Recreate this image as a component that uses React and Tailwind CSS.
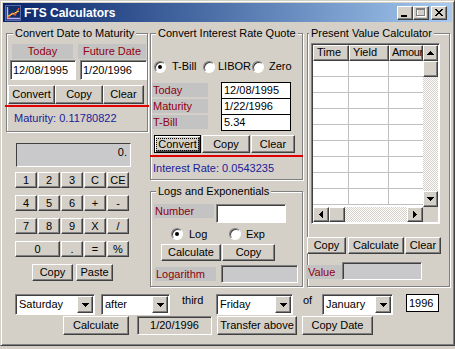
import React from "react";

const RAISED =
  "border border-t-white border-l-white border-r-[#404040] border-b-[#404040] shadow-[inset_-1px_-1px_0_#808080]";
const SUNKEN =
  "border border-t-[#808080] border-l-[#808080] border-r-white border-b-white shadow-[inset_1px_1px_0_#404040]";
const LABEL = "bg-[#c3c3c3] text-[#900010]";

function Btn({ className = "", children }) {
  return (
    <div
      className={`${RAISED} bg-[#d4d0c8] flex items-center justify-center leading-[13px] whitespace-nowrap shrink-0 ${className}`}
    >
      {children}
    </div>
  );
}

function Group({ title, className = "", legend = "ml-[5px]", children }) {
  return (
    <fieldset
      className={`border border-[#808080] shadow-[inset_1px_1px_0_#ffffff,1px_1px_0_#ffffff] min-w-0 ${className}`}
    >
      <legend className={`px-[2px] leading-[13px] bg-[#d4d0c8] ${legend}`}>{title}</legend>
      {children}
    </fieldset>
  );
}

function Radio({ checked }) {
  return (
    <div className="w-[12px] h-[12px] shrink-0 rounded-full bg-white border border-t-[#808080] border-l-[#808080] border-b-white border-r-white shadow-[inset_1px_1px_0_#404040] flex items-center justify-center">
      {checked && <div className="w-[4px] h-[4px] rounded-full bg-black" />}
    </div>
  );
}

function RadioItem({ className = "", checked, label, gap = "ml-[5px]" }) {
  return (
    <div className={`flex items-center shrink-0 ${className}`}>
      <Radio checked={checked} />
      <span className={`${gap} leading-[13px]`}>{label}</span>
    </div>
  );
}

function TriDown() {
  return (
    <svg width="7" height="4" viewBox="0 0 7 4" shapeRendering="crispEdges">
      <path d="M0 0h7v1h-1v1h-1v1h-1v1h-1v-1h-1v-1h-1v-1h-1z" fill="#000" />
    </svg>
  );
}
function TriUp() {
  return (
    <svg width="7" height="4" viewBox="0 0 7 4" shapeRendering="crispEdges">
      <path d="M3 0h1v1h1v1h1v1h1v1h-7v-1h1v-1h1v-1h1z" fill="#000" />
    </svg>
  );
}
function TriLeft() {
  return (
    <svg width="4" height="7" viewBox="0 0 4 7" shapeRendering="crispEdges">
      <path d="M0 3h1v-1h1v-1h1v-1h1v7h-1v-1h-1v-1h-1v-1h-1z" fill="#000" />
    </svg>
  );
}
function TriRight() {
  return (
    <svg width="4" height="7" viewBox="0 0 4 7" shapeRendering="crispEdges">
      <path d="M0 0h1v1h1v1h1v1h1v1h-1v1h-1v1h-1v1h-1z" fill="#000" />
    </svg>
  );
}

function Select({ className = "", value }) {
  return (
    <div className={`${SUNKEN} p-px bg-white flex items-stretch shrink-0 ${className}`}>
      <span className="flex-1 pl-[2px] flex items-center leading-[13px] overflow-hidden whitespace-nowrap">
        {value}
      </span>
      <div className={`${RAISED} bg-[#d4d0c8] w-[16px] flex items-center justify-center`}>
        <TriDown />
      </div>
    </div>
  );
}

const CHECKER =
  "bg-[repeating-conic-gradient(#ffffff_0%_25%,#d4d0c8_0%_50%)] bg-[length:2px_2px]";

function PVGrid() {
  const rows = Array.from({ length: 9 });
  return (
    <div className={`ml-[3px] w-[129px] h-[181px] ${SUNKEN} p-px flex flex-col bg-white`}>
      <div className="flex flex-1 min-h-0">
        <div className="flex-1 flex flex-col overflow-hidden">
          <div className="flex h-[16px] shrink-0">
            <div className={`${RAISED} bg-[#d4d0c8] w-[36px] pl-[3px] leading-[13px]`}>Time</div>
            <div className={`${RAISED} bg-[#d4d0c8] w-[40px] pl-[3px] leading-[13px]`}>Yield</div>
            <div className={`${RAISED} bg-[#d4d0c8] flex-1 pl-[2px] leading-[13px] overflow-hidden whitespace-nowrap tracking-[-0.3px]`}>
              Amount
            </div>
          </div>
          {rows.map((_, i) => (
            <div key={i} className="flex h-[16px] shrink-0 border-b border-[#c0c0c0]">
              <div className="w-[36px] border-r border-[#c0c0c0]" />
              <div className="w-[40px] border-r border-[#c0c0c0]" />
              <div className="flex-1" />
            </div>
          ))}
        </div>
        <div className="w-[15px] flex flex-col shrink-0">
          <div className={`${RAISED} bg-[#d4d0c8] h-[16px] flex items-center justify-center`}>
            <TriUp />
          </div>
          <div className={`${RAISED} bg-[#d4d0c8] h-[16px]`} />
          <div className={`flex-1 ${CHECKER}`} />
          <div className={`${RAISED} bg-[#d4d0c8] h-[16px] flex items-center justify-center`}>
            <TriDown />
          </div>
        </div>
      </div>
      <div className="h-[15px] flex shrink-0">
        <div className={`${RAISED} bg-[#d4d0c8] w-[16px] flex items-center justify-center`}>
          <TriLeft />
        </div>
        <div className={`${RAISED} bg-[#d4d0c8] w-[16px]`} />
        <div className={`flex-1 ${CHECKER}`} />
        <div className={`${RAISED} bg-[#d4d0c8] w-[16px] flex items-center justify-center`}>
          <TriRight />
        </div>
        <div className="w-[15px] bg-[#d4d0c8]" />
      </div>
    </div>
  );
}

function TitleIcon() {
  return (
    <svg width="16" height="16" viewBox="0 0 16 16">
      <rect x="0.5" y="0.5" width="15" height="15" fill="#10306a" stroke="#5a6aa8" />
      <path d="M2.5 2 V13.5 H15" stroke="#c0b0ff" strokeWidth="1.4" fill="none" />
      <path d="M3 13 L7 8 L10 10 L14 3" stroke="#ff5030" strokeWidth="1.3" fill="none" />
      <path d="M3 11 L14 6" stroke="#f0e040" strokeWidth="1" fill="none" />
    </svg>
  );
}

function CaptionBtn({ children, className = "" }) {
  return (
    <div className={`${RAISED} bg-[#d4d0c8] w-[16px] h-[14px] flex items-center justify-center ${className}`}>
      {children}
    </div>
  );
}

export default function App() {
  const calcRows = [
    ["1", "2", "3", "C", "CE"],
    ["4", "5", "6", "+", "-"],
    ["7", "8", "9", "X", "/"],
  ];
  return (
    <div className="w-[455px] h-[349px] bg-[#d4d0c8] font-['Liberation_Sans',Arial,sans-serif] text-[11px] text-black">
      <div className="w-[455px] h-[346px] border border-t-[#d4d0c8] border-l-[#d4d0c8] border-b-[#404040] border-r-[#404040] shadow-[inset_1px_1px_0_#ffffff,inset_-1px_-1px_0_#808080] p-[2px] flex flex-col">
        {/* Title bar */}
        <div className="h-[19px] shrink-0 flex items-center bg-linear-to-r from-[#0a246a] to-[#a6caf0] pl-[2px] pr-[5px]">
          <TitleIcon />
          <span className="ml-[3px] text-white font-bold text-[12px] leading-[14px]">FTS Calculators</span>
          <div className="ml-auto flex items-center">
            <CaptionBtn>
              <svg width="8" height="8" viewBox="0 0 8 8" shapeRendering="crispEdges">
                <rect x="0" y="6" width="6" height="2" fill="#000" />
              </svg>
            </CaptionBtn>
            <CaptionBtn>
              <svg width="10" height="9" viewBox="0 0 10 9" shapeRendering="crispEdges">
                <rect x="1.5" y="1.5" width="8" height="7" fill="none" stroke="#ffffff" />
                <rect x="0.5" y="0.5" width="8" height="7" fill="none" stroke="#808080" />
                <rect x="0" y="1" width="9" height="1" fill="#808080" />
              </svg>
            </CaptionBtn>
            <CaptionBtn className="ml-[2px]">
              <svg width="8" height="7" viewBox="0 0 8 7" shapeRendering="crispEdges">
                <path
                  d="M0 0h2v1h1v1h2v-1h1v-1h2v1h-1v1h-1v1h-1v1h1v1h1v1h1v1h-2v-1h-1v-1h-2v1h-1v1h-2v-1h1v-1h1v-1h1v-1h-1v-1h-1v-1h-1z"
                  fill="#000"
                />
              </svg>
            </CaptionBtn>
          </div>
        </div>

        {/* Main columns */}
        <div className="flex items-start pl-[3px] mt-[5px]">
          {/* Left column */}
          <div className="w-[142px] shrink-0 flex flex-col">
            <Group title="Convert Date to Maturity" className="w-[142px]" legend="ml-[6px]">
              <div className="pt-[4px] pb-[6px]">
                <div className="flex h-[15px]">
                  <div className={`ml-[5px] w-[61px] ${LABEL} flex items-center justify-center`}>Today</div>
                  <div className={`ml-[5px] w-[68px] ${LABEL} flex items-center justify-center`}>Future Date</div>
                </div>
                <div className="flex mt-[1px]">
                  <div className={`ml-[3px] w-[66px] h-[20px] ${SUNKEN} bg-white pl-[2px] flex items-center`}>
                    12/08/1995
                  </div>
                  <div className={`ml-[4px] w-[67px] h-[20px] ${SUNKEN} bg-white pl-[2px] flex items-center`}>
                    1/20/1996
                  </div>
                </div>
                <div className="flex mt-[5px] h-[19px]">
                  <Btn className="ml-[1px] w-[47px]">Convert</Btn>
                  <Btn className="w-[48px]">Copy</Btn>
                  <Btn className="w-[41px]">Clear</Btn>
                </div>
                <div className="-mx-[2px] mt-[1px] h-[2px] bg-[#e00000]" />
                <div className="mt-[5px] ml-[7px] text-[#202098] leading-[13px]">Maturity: 0.11780822</div>
              </div>
            </Group>

            {/* Calculator */}
            <div className="ml-[10px] mt-[11px] w-[115px] h-[24px] bg-[#c9c9cc] border border-t-[#404040] border-l-[#404040] border-r-white border-b-white flex justify-end pr-[3px] pt-[2px] leading-[13px]">
              0.
            </div>
            <div className="ml-[9px] mt-[5px] grid grid-cols-[repeat(5,22px)] auto-rows-[16px] gap-x-px gap-y-[7px]">
              {calcRows.flat().map((k, i) => (
                <Btn key={i} className="h-[16px]">
                  {k}
                </Btn>
              ))}
              <Btn className="col-span-2 h-[16px]">0</Btn>
              <Btn className="h-[16px]">.</Btn>
              <Btn className="h-[16px]">=</Btn>
              <Btn className="h-[16px]">%</Btn>
            </div>
            <div className="flex mt-[7px] h-[17px]">
              <Btn className="ml-[26px] w-[41px]">Copy</Btn>
              <Btn className="ml-[3px] w-[37px]">Paste</Btn>
            </div>
          </div>

          {/* Middle column */}
          <div className="ml-[2px] w-[153px] shrink-0 flex flex-col">
            <Group title="Convert Interest Rate Quote" className="w-[153px]" legend="ml-[5px]">
              <div className="pt-[20px] pb-[4px]">
                <div className="flex h-[13px] items-center ml-[3px]">
                  <RadioItem className="w-[49px]" checked label="T-Bill" gap="ml-[6px]" />
                  <RadioItem className="w-[49px]" label="LIBOR" gap="ml-[3px]" />
                  <RadioItem label="Zero" gap="ml-[5px]" />
                </div>
                <div className="mt-[9px]">
                  {[
                    ["Today", "12/08/1995"],
                    ["Maturity", "1/22/1996"],
                    ["T-Bill", "5.34"],
                  ].map(([l, v]) => (
                    <div key={l} className="flex h-[16px]">
                      <div className={`ml-[1px] mt-[1px] w-[56px] h-[14px] ${LABEL} pl-[1px] leading-[14px]`}>{l}</div>
                      <div className="ml-[13px] w-[70px] h-[17px] shrink-0 border border-black bg-white pl-[2px] leading-[15px]">
                        {v}
                      </div>
                    </div>
                  ))}
                </div>
                <div className="flex mt-[5px] h-[18px]">
                  <div className="ml-[3px] w-[47px] shrink-0 border border-black bg-[#d4d0c8] shadow-[inset_1px_1px_0_#ffffff,inset_-1px_-1px_0_#404040,inset_-2px_-2px_0_#808080] flex items-center justify-center">
                    <span className="border border-dotted border-black px-[1px] leading-[11px]">Convert</span>
                  </div>
                  <Btn className="ml-[1px] w-[48px]">Copy</Btn>
                  <Btn className="ml-[1px] w-[44px]">Clear</Btn>
                </div>
                <div className="-mx-px mt-[2px] h-[2px] bg-[#e00000]" />
                <div className="mt-[5px] ml-[2px] text-[#202098] leading-[13px]">Interest Rate: 0.0543235</div>
              </div>
            </Group>

            <Group title="Logs and Exponentials" className="w-[153px] mt-[5px]" legend="ml-[5px]">
              <div className="pt-[6px] pb-[3px]">
                <div className="flex h-[19px]">
                  <div className={`ml-[3px] w-[60px] h-[14px] ${LABEL} pl-[1px] leading-[14px]`}>Number</div>
                  <div className={`ml-[2px] w-[70px] h-[19px] ${SUNKEN} bg-white`} />
                </div>
                <div className="flex h-[12px] items-center mt-[5px] ml-[20px]">
                  <RadioItem className="w-[58px]" checked label="Log" gap="ml-[6px]" />
                  <RadioItem label="Exp" gap="ml-[5px]" />
                </div>
                <div className="flex h-[17px] mt-[4px]">
                  <Btn className="ml-[10px] w-[60px]">Calculate</Btn>
                  <Btn className="ml-[1px] w-[53px]">Copy</Btn>
                </div>
                <div className="flex h-[18px] mt-[4px]">
                  <div className={`ml-[4px] mt-[2px] w-[61px] h-[14px] ${LABEL} pl-[1px] leading-[14px]`}>Logarithm</div>
                  <div className={`ml-[5px] w-[77px] h-[18px] ${SUNKEN} bg-[#c9c9cc]`} />
                </div>
              </div>
            </Group>
          </div>

          {/* Right column */}
          <div className="ml-[4px] w-[143px] shrink-0">
            <Group title="Present Value Calculator" className="w-[143px]" legend="ml-[1px]">
              <div className="pt-[3px] pb-[6px]">
                <PVGrid />
                <div className="flex mt-[13px] h-[17px]">
                  <Btn className="-ml-[1px] w-[39px]">Copy</Btn>
                  <Btn className="ml-[2px] w-[56px]">Calculate</Btn>
                  <Btn className="ml-[1px] w-[36px]">Clear</Btn>
                </div>
                <div className="flex mt-[8px] h-[18px]">
                  <div className={`-ml-[2px] mt-[3px] w-[36px] h-[14px] ${LABEL} pl-[2px] leading-[14px]`}>Value</div>
                  <div className={`w-[80px] h-[18px] ${SUNKEN} bg-[#c9c9cc]`} />
                </div>
              </div>
            </Group>
          </div>
        </div>

        {/* Bottom rows */}
        <div className="pl-[3px] mt-[7px]">
          <div className="flex items-start h-[21px]">
            <Select className="ml-[9px] w-[80px] h-[21px]" value="Saturday" />
            <Select className="ml-[6px] w-[69px] h-[21px]" value="after" />
            <div className="ml-[12px] w-[34px] shrink-0 leading-[13px]">third</div>
            <Select className="w-[77px] h-[21px]" value="Friday" />
            <div className="ml-[10px] w-[19px] shrink-0 leading-[13px]">of</div>
            <Select className="w-[71px] h-[21px]" value="January" />
            <div className="ml-[13px] w-[33px] h-[18px] shrink-0 border border-black bg-white pl-[2px] leading-[16px]">
              1996
            </div>
          </div>
          <div className="flex h-[19px] mt-px">
            <Btn className="ml-[57px] w-[66px]">Calculate</Btn>
            <div className={`ml-[8px] w-[75px] ${SUNKEN} flex items-center justify-center leading-[13px]`}>1/20/1996</div>
            <Btn className="ml-[5px] w-[80px]">Transfer above</Btn>
            <Btn className="ml-[5px] w-[71px]">Copy Date</Btn>
          </div>
        </div>
      </div>
    </div>
  );
}
